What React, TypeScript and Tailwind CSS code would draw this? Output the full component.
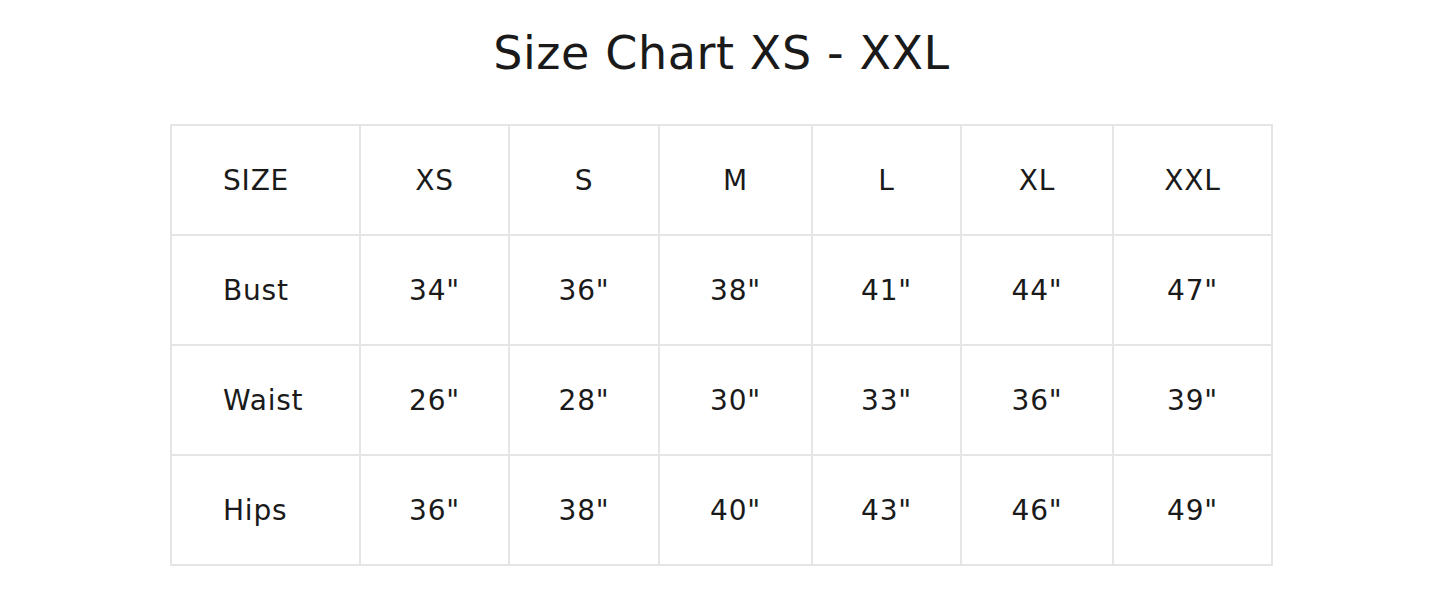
const sizes = ['XS', 'S', 'M', 'L', 'XL', 'XXL'];

const rows = [
  { label: 'Bust', values: ['34"', '36"', '38"', '41"', '44"', '47"'] },
  { label: 'Waist', values: ['26"', '28"', '30"', '33"', '36"', '39"'] },
  { label: 'Hips', values: ['36"', '38"', '40"', '43"', '46"', '49"'] },
];

const colWidths = ['w-[189px]', 'w-[149px]', 'w-[150px]', 'w-[153px]', 'w-[149px]', 'w-[152px]', 'w-[159px]'];

export default function App() {
  return (
    <div className="w-[1440px] h-[608px] bg-white text-[#1a1a1a] font-['DejaVu_Sans',sans-serif]">
      <h1 className="pt-[24px] pl-[3px] text-center text-[46px] leading-[58px] tracking-[0.6px]">Size Chart XS - XXL</h1>

      <table className="mt-[42px] ml-[170px] w-[1102px] table-fixed border-collapse">
        <colgroup>
          {colWidths.map((w, i) => (
            <col key={i} className={w} />
          ))}
        </colgroup>
        <thead>
          <tr className="h-[110px]">
            <th className="border-2 border-[#e5e5e5] pl-[51px] pt-[2px] text-left text-[28px] tracking-[0.8px] font-normal">SIZE</th>
            {sizes.map((s) => (
              <th key={s} className="border-2 border-[#e5e5e5] pt-[2px] text-center text-[28px] tracking-[0.8px] font-normal">
                {s}
              </th>
            ))}
          </tr>
        </thead>
        <tbody>
          {rows.map((row) => (
            <tr key={row.label} className="h-[110px]">
              <td className="border-2 border-[#e5e5e5] pl-[51px] pt-[2px] text-left text-[28px] tracking-[0.8px]">{row.label}</td>
              {row.values.map((v, i) => (
                <td key={i} className="border-2 border-[#e5e5e5] pt-[2px] text-center text-[28px] tracking-[0.8px]">
                  {v}
                </td>
              ))}
            </tr>
          ))}
        </tbody>
      </table>
    </div>
  );
}
